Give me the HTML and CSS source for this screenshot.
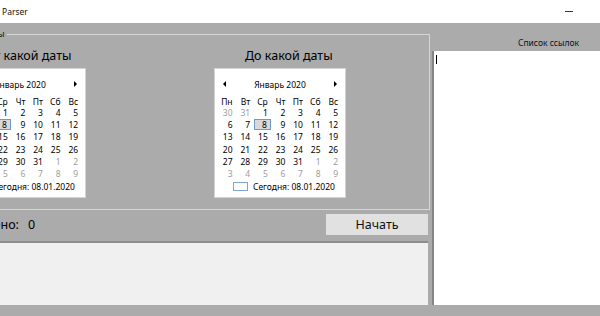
FILE: index.html
```html
<!DOCTYPE html>
<html lang="ru">
<head>
  <meta charset="UTF-8">
  <title>Parser</title>
  <link rel="stylesheet" href="styles.css">
</head>
<body>
  <div class="titlebar">
    <span class="title">Parser</span>
    <span class="minimize"></span>
  </div>

  <div class="main">
    <div class="left">
      <fieldset class="group">
        <legend>Даты</legend>
        <div class="dates">
          <div class="date-col">
            <div class="date-label">От какой даты</div>
            <div class="cal">
              <div class="cal-head">
                <span class="arrow-prev"></span>
                <span>Январь 2020</span>
                <span class="arrow-next"></span>
              </div>
              <div class="cal-grid">
                <span>Пн</span><span>Вт</span><span>Ср</span><span>Чт</span><span>Пт</span><span>Сб</span><span>Вс</span>
                <span class="other">30</span><span class="other">31</span><span>1</span><span>2</span><span>3</span><span>4</span><span>5</span>
                <span>6</span><span>7</span><span class="sel">8</span><span>9</span><span>10</span><span>11</span><span>12</span>
                <span>13</span><span>14</span><span>15</span><span>16</span><span>17</span><span>18</span><span>19</span>
                <span>20</span><span>21</span><span>22</span><span>23</span><span>24</span><span>25</span><span>26</span>
                <span>27</span><span>28</span><span>29</span><span>30</span><span>31</span><span class="other">1</span><span class="other">2</span>
                <span class="other">3</span><span class="other">4</span><span class="other">5</span><span class="other">6</span><span class="other">7</span><span class="other">8</span><span class="other">9</span>
              </div>
              <div class="cal-today">
                <span class="today-box"></span>
                <span>Сегодня: 08.01.2020</span>
              </div>
            </div>
          </div>

          <div class="date-col">
            <div class="date-label">До какой даты</div>
            <div class="cal">
              <div class="cal-head">
                <span class="arrow-prev"></span>
                <span>Январь 2020</span>
                <span class="arrow-next"></span>
              </div>
              <div class="cal-grid">
                <span>Пн</span><span>Вт</span><span>Ср</span><span>Чт</span><span>Пт</span><span>Сб</span><span>Вс</span>
                <span class="other">30</span><span class="other">31</span><span>1</span><span>2</span><span>3</span><span>4</span><span>5</span>
                <span>6</span><span>7</span><span class="sel">8</span><span>9</span><span>10</span><span>11</span><span>12</span>
                <span>13</span><span>14</span><span>15</span><span>16</span><span>17</span><span>18</span><span>19</span>
                <span>20</span><span>21</span><span>22</span><span>23</span><span>24</span><span>25</span><span>26</span>
                <span>27</span><span>28</span><span>29</span><span>30</span><span>31</span><span class="other">1</span><span class="other">2</span>
                <span class="other">3</span><span class="other">4</span><span class="other">5</span><span class="other">6</span><span class="other">7</span><span class="other">8</span><span class="other">9</span>
              </div>
              <div class="cal-today">
                <span class="today-box"></span>
                <span>Сегодня: 08.01.2020</span>
              </div>
            </div>
          </div>
        </div>
      </fieldset>

      <div class="actions">
        <span class="found-label">Найдено:</span>
        <span class="found-count">0</span>
        <button class="start">Начать</button>
      </div>

      <div class="log"></div>
    </div>

    <div class="splitter"></div>

    <div class="links">
      <div class="links-label">Список ссылок</div>
      <div class="links-box"><span class="caret"></span></div>
    </div>
  </div>
</body>
</html>
```

FILE: styles.css
```css
body {
  margin: 0;
  width: 600px;
  height: 316px;
  overflow: hidden;
  background-color: #ababab;
  font-family: "Noto Sans", "DejaVu Sans", sans-serif;
  color: #000;
}

.titlebar {
  height: 23px;
  background-color: #fff;
  display: flex;
  align-items: center;
  justify-content: space-between;
  padding: 0 27px 0 2px;
}

.title {
  font-size: 8.5px;
  color: #111;
}

.minimize {
  width: 8px;
  height: 1px;
  background-color: #333;
}

.main {
  display: flex;
  height: 282px;
}

.left {
  width: 431px;
  display: flex;
  flex-direction: column;
}

/* group box */
.group {
  box-sizing: border-box;
  height: 182px;
  margin: 5px 1px 0 -60px;
  padding: 0;
  border: 1px solid #d6d6d6;
  min-width: 0;
}

.group legend {
  margin-left: 39px;
  padding: 0 2px;
  font-size: 9px;
  line-height: 12px;
  color: #111;
}

.dates {
  display: flex;
  gap: 128px;
  padding-left: 13px;
  margin-top: 8px;
}

.date-col {
  display: flex;
  flex-direction: column;
}

.date-label {
  margin-left: 31px;
  font-size: 12.5px;
  line-height: 16px;
  margin-bottom: 4px;
}

/* month calendar */
.cal {
  box-sizing: border-box;
  width: 132px;
  height: 130px;
  border: 1px solid #d4d4d4;
  background-color: #fff;
  font-size: 8.5px;
}

.cal-head {
  display: flex;
  align-items: center;
  justify-content: space-between;
  height: 20px;
  margin-top: 5px;
  padding: 0 8px;
}

.arrow-prev {
  width: 0;
  height: 0;
  border-top: 3px solid transparent;
  border-bottom: 3px solid transparent;
  border-right: 3px solid #000;
}

.arrow-next {
  width: 0;
  height: 0;
  border-top: 3px solid transparent;
  border-bottom: 3px solid transparent;
  border-left: 3px solid #000;
}

.cal-grid {
  display: grid;
  grid-template-columns: repeat(7, 17.6px);
  grid-template-rows: 11px repeat(6, 12.2px);
  margin-top: 2px;
  line-height: 12px;
}

.cal-grid span {
  text-align: right;
}

.cal-grid .other {
  color: #9d9d9d;
}

.cal-grid .sel {
  box-sizing: border-box;
  margin: 0 -3px 1px 4px;
  padding-right: 3px;
  line-height: 10px;
  border: 1px solid #6f98cb;
  background-color: #d9d9d9;
}

.cal-today {
  display: flex;
  align-items: center;
  height: 13px;
  padding-left: 18px;
}

.today-box {
  box-sizing: border-box;
  width: 15px;
  height: 9px;
  border: 1px solid #7ca4d8;
  margin-right: 5px;
}

/* action row */
.actions {
  display: flex;
  align-items: center;
  height: 21px;
  margin: 4px 0 0 -38px;
  font-size: 12.5px;
}

.found-count {
  margin-left: 9px;
}

.start {
  margin-left: auto;
  margin-right: 3px;
  width: 102px;
  height: 21px;
  border: none;
  background-color: #e1e1e1;
  font-family: "Noto Sans", "DejaVu Sans", sans-serif;
  font-size: 12.5px;
  color: #111;
  padding: 0;
}

.log {
  margin: 6px 3px 0 0;
  height: 62px;
  border-top: 2px solid #8c8c8c;
  background-color: #f0f0f0;
}

.splitter {
  width: 1px;
}

/* links list */
.links {
  flex: 1;
  display: flex;
  flex-direction: column;
}

.links-label {
  height: 28px;
  box-sizing: border-box;
  padding: 14px 0 0 86px;
  font-size: 8.5px;
  line-height: 12px;
  color: #111;
}

.links-box {
  height: 254px;
  box-sizing: border-box;
  background-color: #fff;
  border-left: 2px solid #858585;
  padding: 4px 0 0 2px;
}

.caret {
  display: block;
  width: 1px;
  height: 9px;
  background-color: #000;
}
```
